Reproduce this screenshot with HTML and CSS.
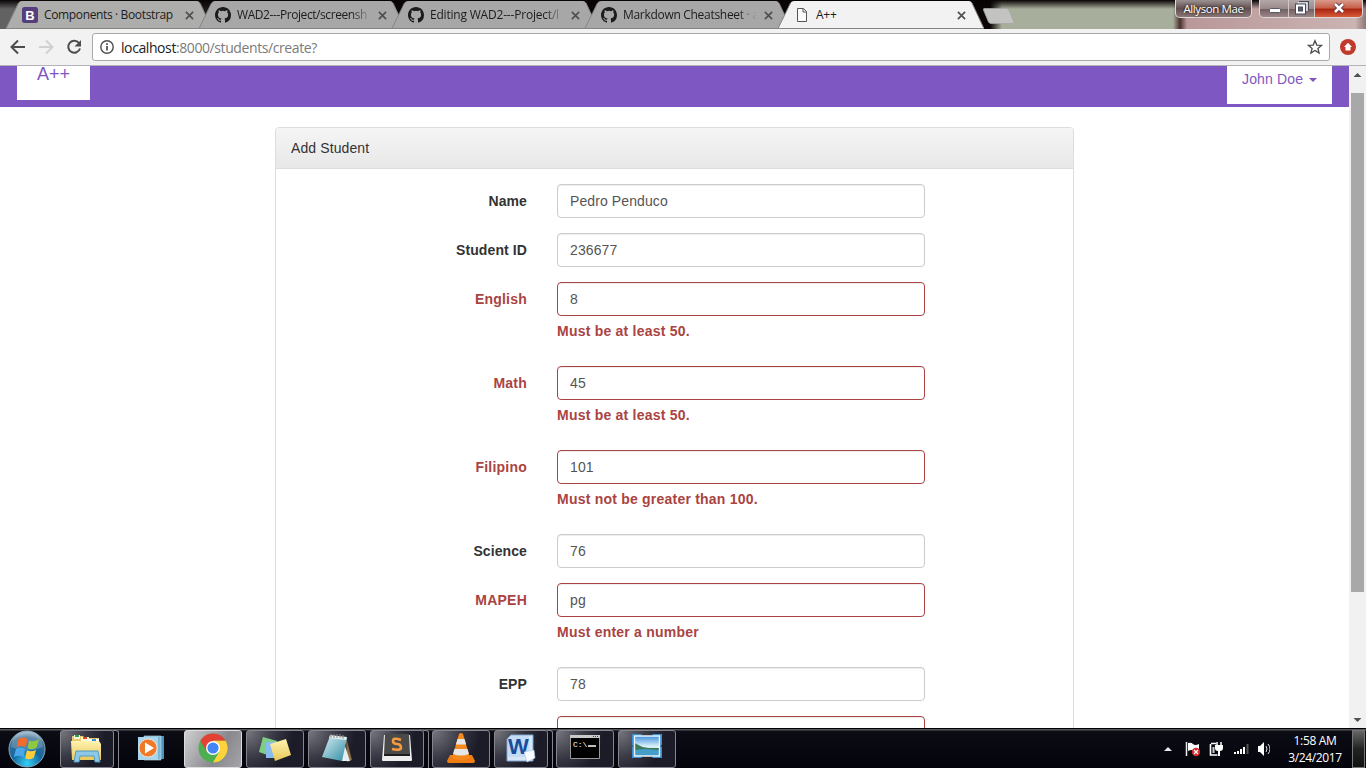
FILE: index.html
```html
<!DOCTYPE html>
<html lang="en">
<head>
<meta charset="utf-8">
<title>A++</title>
<link rel="stylesheet" href="styles.css">
</head>
<body>
<svg width="0" height="0" class="defs">
  <defs>
    <symbol id="x" viewBox="0 0 10 10"><path d="M1 1l8 8M9 1L1 9" stroke="#4f4f4f" stroke-width="1.8" fill="none"/></symbol>
    <symbol id="github" viewBox="0 0 16 16"><path fill="#1b1b1b" d="M8 0C3.58 0 0 3.58 0 8c0 3.54 2.29 6.53 5.47 7.59.4.07.55-.17.55-.38 0-.19-.01-.82-.01-1.49-2.01.37-2.53-.49-2.69-.94-.09-.23-.48-.94-.82-1.13-.28-.15-.68-.52-.01-.53.63-.01 1.08.58 1.23.82.72 1.21 1.87.87 2.33.66.07-.52.28-.87.51-1.07-1.78-.2-3.64-.89-3.64-3.95 0-.87.31-1.59.82-2.15-.08-.2-.36-1.02.08-2.12 0 0 .67-.21 2.2.82a7.6 7.6 0 0 1 4 0c1.53-1.04 2.2-.82 2.2-.82.44 1.1.16 1.92.08 2.12.51.56.82 1.27.82 2.15 0 3.07-1.87 3.75-3.65 3.95.29.25.54.73.54 1.48 0 1.07-.01 1.93-.01 2.2 0 .21.15.46.55.38A8 8 0 0 0 16 8c0-4.42-3.58-8-8-8z"/></symbol>
    <symbol id="tabshape" viewBox="0 0 206 29"><path class="fill" d="M0 29L12.500 3Q13.500 1 16 1H191Q193 1 194 3L206 29Z"/><path class="edge" d="M0 28.500L12.500 3M194 3L206 28.500H0" fill="none"/></symbol>
    <linearGradient id="sky" x2="0" y2="1"><stop stop-color="#3d8fdc"/><stop offset=".5" stop-color="#d8eef8"/></linearGradient>
    <linearGradient id="pad" x2="1" y2="1"><stop stop-color="#d9f0f4"/><stop offset="1" stop-color="#2f8ba3"/></linearGradient>
    <linearGradient id="yel" x2="0" y2="1"><stop stop-color="#fff3b0"/><stop offset="1" stop-color="#e9c85a"/></linearGradient>
    <radialGradient id="orb" cx=".5" cy=".9" r=".9"><stop stop-color="#35d0f5"/><stop offset=".45" stop-color="#14679f"/><stop offset=".8" stop-color="#3d6f94"/><stop offset="1" stop-color="#a9c3d3"/></radialGradient>
  </defs>
</svg>

<header class="tabstrip">
  <div class="tab blurry-a">
    <svg class="shape"><use href="#tabshape"/></svg>
    <svg class="favicon" viewBox="0 0 16 16"><rect width="16" height="16" rx="2.500" fill="#563d7c"/><text x="8" y="12.800" text-anchor="middle" class="b-letter">B</text></svg>
    <span class="title t1">Components · Bootstrap</span><svg class="close"><use href="#x"/></svg>
  </div>
  <div class="tab">
    <svg class="shape"><use href="#tabshape"/></svg>
    <svg class="favicon"><use href="#github"/></svg>
    <span class="title t2 fade">WAD2---Project/screensh</span><svg class="close"><use href="#x"/></svg>
  </div>
  <div class="tab">
    <svg class="shape"><use href="#tabshape"/></svg>
    <svg class="favicon"><use href="#github"/></svg>
    <span class="title t3 fade">Editing WAD2---Project/l</span><svg class="close"><use href="#x"/></svg>
  </div>
  <div class="tab">
    <svg class="shape"><use href="#tabshape"/></svg>
    <svg class="favicon"><use href="#github"/></svg>
    <span class="title t4 fade">Markdown Cheatsheet · a</span><svg class="close"><use href="#x"/></svg>
  </div>
  <div class="tab active">
    <svg class="shape"><use href="#tabshape"/></svg>
    <svg class="favicon" viewBox="0 0 16 16"><path d="M3.500 1.500H9.500L12.500 4.500V14.500H3.500ZM9 1.500V5H12.500" fill="#fafafa" stroke="#555"/></svg>
    <span class="title t5">A++</span><svg class="close"><use href="#x"/></svg>
  </div>
  <svg class="newtab" viewBox="0 0 34 16"><path d="M2 .5H24Q26 .5 27 2L32 14.500Q32 15.500 31 15.500H9Q7.500 15.500 6.500 14L1.500 2Q1 .5 2 .5Z" fill="#c3c4c1" stroke="#a3a59f" stroke-width=".8"/></svg>
  <div class="caption">
    <div class="user">Allyson Mae</div>
    <div class="winbtns">
      <div class="wb"><svg width="28" height="18"><rect x="9.500" y="8.500" width="11" height="4" rx="1" fill="#fff" stroke="#555a66"/></svg></div>
      <div class="wb"><svg width="25" height="18"><path d="M10 3h8v8" fill="none" stroke="#444b5c" stroke-width="4"/><path d="M9 3h9v8" fill="none" stroke="#fff" stroke-width="1.500"/><path d="M8 5.500h7v7h-7z" fill="#555c6a" stroke="#444b5c" stroke-width="4"/><path d="M8 5.500h7v7h-7z" fill="none" stroke="#fff" stroke-width="2"/></svg></div>
      <div class="wb red"><svg width="47" height="18"><path d="M20 4l8 8M28 4l-8 8" stroke="#563038" stroke-width="4.500"/><path d="M20 4l8 8M28 4l-8 8" stroke="#fff" stroke-width="2.600"/></svg></div>
    </div>
  </div>
</header>

<div class="toolbar">
  <svg class="nav" viewBox="0 0 92 36"><g fill="none" stroke-width="2"><path d="M25 18H12.500M18 11.500L11.500 18L18 24.500" stroke="#4d4d4d"/><path d="M39 18H51.500M46 11.500L52.500 18L46 24.500" stroke="#d0d0d0"/><path d="M79 14A6 6 0 1 0 80 19.500" stroke="#4d4d4d"/></g><path d="M81 11v6.500h-6.500z" fill="#4d4d4d"/></svg>
  <div class="omnibox">
    <svg width="14" height="14" viewBox="0 0 14 14"><circle cx="7" cy="7" r="6.200" fill="none" stroke="#4d4d4d" stroke-width="1.400"/><path d="M7 6v4.500M7 3.300v1.600" stroke="#4d4d4d" stroke-width="1.700"/></svg>
    <span class="url"><b>localhost</b>:8000/students/create?</span>
    <svg class="star" width="16" height="16" viewBox="0 0 16 16"><path d="M8 1.700L9.800 6.100L14.500 6.400L10.900 9.400L12.100 14L8 11.500L3.900 14L5.100 9.400L1.500 6.400L6.200 6.100Z" fill="none" stroke="#4b4b4b" stroke-width="1.300"/></svg>
  </div>
  <svg class="ext" width="16" height="16" viewBox="0 0 16 16"><circle cx="8" cy="8" r="8" fill="#c0392b"/><path d="M8 3.700L12 8H10.500V11.500H5.500V8H4Z" fill="#fff"/></svg>
</div>

<div class="viewport">
  <main class="page">
    <nav class="navbar"><a class="brand">A++</a><a class="account">John Doe <i class="caret"></i></a></nav>
    <section class="panel">
      <h1 class="panel-heading">Add Student</h1>
      <form class="panel-body">
        <div class="group"><label>Name</label><div class="control">Pedro Penduco</div></div>
        <div class="group"><label>Student ID</label><div class="control">236677</div></div>
        <div class="group error"><label>English</label><div class="control">8</div><strong class="help">Must be at least 50.</strong></div>
        <div class="group error"><label>Math</label><div class="control">45</div><strong class="help">Must be at least 50.</strong></div>
        <div class="group error"><label>Filipino</label><div class="control">101</div><strong class="help">Must not be greater than 100.</strong></div>
        <div class="group"><label>Science</label><div class="control">76</div></div>
        <div class="group error"><label>MAPEH</label><div class="control">pg</div><strong class="help">Must enter a number</strong></div>
        <div class="group"><label>EPP</label><div class="control">78</div></div>
        <div class="group error"><label></label><div class="control"></div></div>
      </form>
    </section>
  </main>
  <aside class="scrollbar">
    <svg width="17" height="17"><path d="M8.500 7L12.500 11H4.500Z" fill="#505050"/></svg>
    <div class="thumb"></div>
    <svg class="down" width="17" height="17"><path d="M8.500 11L12.500 7H4.500Z" fill="#505050"/></svg>
  </aside>
</div>

<footer class="taskbar">
  <svg class="start" width="40" height="40" viewBox="0 0 40 40"><circle cx="20" cy="20" r="18" fill="url(#orb)" stroke="#89a9bd"/><path d="M4 18Q5 3 20 3T36 18Q20 25 4 18Z" fill="#fff" opacity=".2"/><g transform="translate(-2.500 -3.500) scale(1.150)"><path d="M12 12Q16 9 20 12L18.500 19Q14.500 16.500 10.500 19Z" fill="#f26a2c"/><path d="M21.500 13Q25 15 30 12L28 19Q24 22 20 19.500Z" fill="#8fc93f"/><path d="M10 20.500Q14 18 18 20.500L16.500 27.500Q12.500 25 8 27.500Z" fill="#4aa8ea"/><path d="M19.500 21.500Q23.500 23.500 27.500 21L25.500 28Q21.500 30.500 18 28.500Z" fill="#ffcd3a"/></g></svg>
  <div class="task stacked"><svg viewBox="0 0 36 32"><path d="M3 4h11l2 2h14v22H3z" fill="#e9ca6d"/><path d="M5 3h6v4H5z" fill="#f7f7e0"/><path d="M6 3h4v2H6z" fill="#31a049"/><path d="M12 5h8v5h-8z" fill="#fff7d0"/><path d="M14 5h4v2h-4z" fill="#d64b2a"/><path d="M20 7h10v5H20z" fill="#fff"/><path d="M23 7h4v2h-4z" fill="#3c90d8"/><path d="M2 9h28l2 3v16H3z" fill="url(#yel)"/><path d="M7 19h22l2 11h-5l-1-6H11l-1 6H5z" fill="#8cc9e8" stroke="#5598c0"/></svg></div>
  <div class="task plain"><svg viewBox="0 0 36 32"><path d="M14 4h17v23H14z" fill="#4a92bb"/><path d="M11 4h17v24H11z" fill="#7db7d6" stroke="#cae5f1" stroke-width=".6"/><path d="M5 5h20v23H5z" fill="#a9d4e9"/><circle cx="15" cy="16" r="9" fill="#ef7927" stroke="#fff" stroke-opacity=".6"/><path d="M12 10.500v11l9-5.500z" fill="#fff"/></svg></div>
  <div class="task lit"><svg viewBox="0 0 36 32"><circle cx="18" cy="16" r="14.500" fill="#4caf50"/><path d="M18 16L5.400 8.750A14.500 14.500 0 0 1 30.600 8.750H18Z" fill="#e34133"/><path d="M18 8.750H30.600A14.500 14.500 0 0 1 18 30.500L24.300 19.600Z" fill="#fdd23c"/><path d="M5.400 8.750L11.700 19.600L18 16V8.750Z" fill="#e34133"/><circle cx="18" cy="16" r="7" fill="#fff"/><circle cx="18" cy="16" r="5.600" fill="#4285f4"/></svg></div>
  <div class="task"><svg viewBox="0 0 36 32"><path d="M6 5l14 4-4 16-14-5z" fill="#7fce86"/><path d="M9 10h15v16H9z" fill="#88bcf0"/><path d="M13 12l16-5 5 16-16 6z" fill="url(#yel)"/></svg></div>
  <div class="task"><svg viewBox="0 0 36 32"><path d="M27 5l6 23-5 2z" fill="#8a6b48"/><path d="M23 5l8 24h-8z" fill="#e8eef0"/><path d="M11 4l17 2-5 23-20-4z" fill="url(#pad)"/><path d="M11 3l17 2-1 3-17-2z" fill="#e6eeee"/><path d="M12 2v4m3-4v4m3-4v4m3-4v4m3-3v4" stroke="#888"/></svg></div>
  <div class="task stacked"><svg viewBox="0 0 36 32"><path d="M5 3h26l2 25q0 1-1 1H4q-1 0-1-1z" fill="#eee"/><path d="M6 2h24l1 20H5z" fill="#4a4a4a"/><path d="M5 22h26v2H5z" fill="#1d1d1d"/><path d="M22 8Q14 5 14 9Q14 12 18 12T22 16Q21 19 13 17" fill="none" stroke="#f59a3d" stroke-width="2.600"/></svg></div>
  <div class="task"><svg viewBox="0 0 36 32"><path d="M7 23h22l3 6q0 2-2 2H6q-2 0-2-2z" fill="#f07c12"/><path d="M16 2q2-2 4 0l7 24q-9 4-18 0z" fill="#f58a1c"/><path d="M14.500 7h7l1.600 5.500h-10.200z" fill="#e6e6e6"/><path d="M11.500 17h13l1.500 5q-8 3-16 0z" fill="#e6e6e6"/></svg></div>
  <div class="task stacked"><svg viewBox="0 0 36 32"><path d="M8 3h22v26H4V7z" fill="#d7e6f7" stroke="#7aa5d2"/><path d="M5 7l3-3h18v21H5z" fill="#c3dbf5"/><text x="15.500" y="22" text-anchor="middle" class="w-letter">W</text><path d="M21 20l10-2 1 8-8 4z" fill="#f8fbff" stroke="#a9c4e4" stroke-width=".6"/></svg></div>
  <div class="task"><svg viewBox="0 0 36 32"><path d="M3.500 3.500h29v23h-29z" fill="#000" stroke="#999"/><path d="M3 3h30v3H3z" fill="#c9c9c9"/><path d="M26 4.500h6" stroke="#444" stroke-dasharray="1 1"/><text x="6" y="15" class="cmd">C:\</text><path d="M21 14h8" stroke="#fff" stroke-width="1.500"/></svg></div>
  <div class="task"><svg viewBox="0 0 36 32"><path d="M3 2h10l-3 4H7v6l-4 3zM33 2H23l3 4h3v6l4 3zM3 26h10l-3-4H7v-6l-4-3zM33 26H23l3-4h3v-6l4-3z" fill="#3b8fd0"/><path d="M5.500 4h25v20h-25z" fill="url(#sky)"/><path d="M5.500 11l8 4 6 1h11v4h-25z" fill="#3c7a5a"/><path d="M5.500 18l10-1 15 1v6h-25z" fill="#459dca"/><path d="M5.500 4h25v20h-25z" fill="none" stroke="#e9f5fb" stroke-width="1.400"/></svg></div>
  <div class="tray">
    <svg width="110" height="40" viewBox="0 0 110 40"><path d="M4 23L8 19L12 23Z" fill="#e8e8f0"/>
      <path d="M26.500 14v14" stroke="#eee" stroke-width="1.500"/><path d="M28 15q3-1 5 1t6 0v8q-3 1-5-1t-6 0z" fill="#fff"/><circle cx="36" cy="24" r="4.200" fill="#d9292b"/><path d="M34 22l4 4m0-4l-4 4" stroke="#fff" stroke-width="1.300"/>
      <path d="M51 15.500h5M50.500 16v11h7" fill="none" stroke="#fff" stroke-width="1.600"/><path d="M53.500 19v6" stroke="#ccc" stroke-width="2"/><path d="M57 14v4m4-4v4" stroke="#fff" stroke-width="1.500"/><path d="M55 17h8v3q0 3-3 3v5h-2v-5q-3 0-3-3z" fill="#fff"/>
      <path d="M75 26v-2m3 2v-3m3 3v-5m3 5v-7" stroke="#fff" stroke-width="2"/><path d="M87.500 26V16" stroke="#555" stroke-width="2"/>
      <path d="M98 18h2l4-4v14l-4-4h-2z" fill="#fff"/><path d="M106 18q2 3 0 6m2-8q4 5 0 10" fill="none" stroke="#ddd"/></svg>
    <div class="clock"><span>1:58 AM</span><span>3/24/2017</span></div>
    <div class="show-desktop"></div>
  </div>
</footer>
</body>
</html>
```
FILE: styles.css
```css
* { box-sizing: border-box; }
body { margin: 0; width: 1366px; height: 768px; overflow: hidden; display: flex; flex-direction: column; font: 14px/22px "Liberation Sans", Arial, sans-serif; background: #fff; }
.defs { position: absolute; }

/* Tab strip */
.tabstrip { height: 29px; flex: none; display: flex; padding-left: 6px; background: linear-gradient(#080404, rgba(8,4,4,0) 9px), linear-gradient(90deg, #626262 0 12px, #1b1a15 210px, #0b0505 240px 990px, #a8ae9c 1002px 1173px, #4b302d 1180px, #b99798 1187px, #cbb4b4 1355px, #8d7777); }
.tab { position: relative; width: 206px; margin-right: -13px; padding-left: 16px; display: flex; align-items: center; flex: none; font: 12px "Open Sans", sans-serif; color: #1c1c1c; }
.shape { position: absolute; inset: 0; width: 206px; height: 29px; fill: #a7a7a7; stroke: none; }
.edge { stroke: #858585; stroke-width: 1; }
.blurry-a .shape { fill: #adadab; }
.active { z-index: 1; }
.active .shape { fill: #f2f2f2; }
.favicon { position: relative; width: 16px; height: 16px; flex: none; }
.b-letter { font: bold 13px "Liberation Sans", sans-serif; fill: #fff; }
.title { position: relative; margin-left: 6px; width: 134px; white-space: nowrap; flex: none; letter-spacing: -.25px; }
.t1 { letter-spacing: -.36px; }
.t2 { letter-spacing: -.42px; }
.t3 { letter-spacing: -.2px; }
.t4 { letter-spacing: -.3px; }
.fade { -webkit-mask-image: linear-gradient(90deg, #000 115px, transparent 134px); mask-image: linear-gradient(90deg, #000 115px, transparent 134px); }
.close { position: relative; width: 9px; height: 9px; margin-left: 7px; margin-top: 1px; flex: none; }
.newtab { width: 34px; height: 16px; margin: 8px 0 0 11px; align-self: flex-start; z-index: 2; }
.caption { margin-left: auto; display: flex; align-items: flex-start; gap: 7px; padding-right: 3px; }
.user { width: 77px; height: 18px; border: 1px solid #dedada; border-top: 0; border-radius: 0 0 5px 5px; background: linear-gradient(#9c9292, #625050 50%, #8b7777); color: #fff; font: 11.500px/17px "Open Sans", sans-serif; letter-spacing: -.4px; text-align: center; text-shadow: 0 0 3px #000; white-space: nowrap; }
.winbtns { display: flex; border: 1px solid #e0d8d8; border-top: 0; border-radius: 0 0 5px 5px; overflow: hidden; height: 18px; }
.wb { height: 18px; background: linear-gradient(#b5a8a8, #99898a 48%, #725e60 50%, #a08b8d); border-right: 1px solid #d2c7c7; }
.wb svg { display: block; }
.red { border: 0; background: linear-gradient(#d99a8b, #c55e49 45%, #a92410 50%, #dc6140); }

/* Address bar */
.toolbar { height: 37px; flex: none; background: #f2f2f2; border-bottom: 1px solid #b5b2b9; display: flex; align-items: center; }
.nav { width: 92px; height: 36px; }
.omnibox { width: 1238px; height: 28px; border: 1px solid #a9a9a9; border-radius: 3px; background: #fff; display: flex; align-items: center; padding: 0 6px 0 7px; }
.url { margin-left: 7px; font: 14px "Open Sans", sans-serif; color: #7b7b7b; letter-spacing: -.41px; }
.url b { font-weight: 400; color: #222; }
.star { margin-left: auto; }
.ext { margin-left: 10px; }

/* Document */
.viewport { height: 662px; flex: none; display: flex; overflow: hidden; }
.page { width: 1349px; height: 662px; overflow: hidden; }
.navbar { height: 41px; background: #7e57c2; display: flex; justify-content: space-between; align-items: flex-start; padding: 0 17px; color: #7e57c2; }
.brand { width: 73px; height: 34px; background: #fff; text-align: center; font-size: 18px; line-height: 16px; }
.account { width: 105px; height: 38px; background: #fff; padding: 2px 0 0 15px; display: flex; align-items: flex-start; letter-spacing: .15px; }
.caret { margin: 10px 0 0 6px; border: 4px solid transparent; border-top-color: #7e57c2; border-bottom: 0; }
.panel { width: 799px; height: 700px; margin: 20px 0 0 275px; border: 1px solid #ddd; border-radius: 4px; }
.panel-heading { margin: 0; height: 41px; padding: 9px 15px; font-weight: 400; font-size: 14px; color: #333; background: linear-gradient(#f5f5f5, #e8e8e8); border-bottom: 1px solid #ddd; border-radius: 3px 3px 0 0; letter-spacing: .1px; }
.panel-body { padding-top: 15px; display: flex; flex-direction: column; gap: 15px; }
.group { display: grid; grid-template-columns: 251px 368px; column-gap: 30px; color: #333; }
.group label { text-align: right; font-weight: 700; padding-top: 6px; letter-spacing: .1px; }
.group.error label { letter-spacing: .22px; }
.control { height: 34px; border: 1px solid #ccc; border-radius: 4px; padding: 5px 12px; color: #555; box-shadow: inset 0 1px 1px rgba(0,0,0,.075); letter-spacing: .1px; }
.error, .help { color: #a94442; }
.error .control { border-color: #a94442; }
.help { grid-column: 2; height: 35px; padding-top: 4px; letter-spacing: .22px; }
.scrollbar { width: 17px; background: #f1f1f1; display: flex; flex-direction: column; align-items: center; }
.scrollbar svg { flex: none; }
.thumb { width: 13px; height: 499px; margin-top: 10px; background: #a8a8a8; }
.down { margin-top: auto; }

/* Taskbar */
.taskbar { height: 40px; flex: none; display: flex; align-items: center; padding-left: 7px; border-top: 1px solid #000; background: linear-gradient(#55555b 0 1px, #0c0c14 2px, #04040c); }
.start { margin-right: 13px; }
.task { position: relative; width: 58px; height: 38px; margin-right: 4px; flex: none; border: 1px solid #85858f; border-radius: 3px; background: radial-gradient(circle at 0 0, #77777f, #3a3a46 40%, #1c1c28 70%); display: flex; align-items: center; justify-content: center; }
.task svg { width: 36px; height: 32px; margin-top: -2px; }
.stacked { width: 54px; margin-right: 8px; }
.stacked::after { content: ""; position: absolute; left: 52px; top: -1px; width: 5px; height: 38px; border: 1px solid #85858f; border-left: 0; border-radius: 0 3px 3px 0; }
.plain { border-color: transparent; background: none; }
.lit { background: linear-gradient(120deg, #d0d0d2, #88888d 60%, #a5a5a9); border-color: #ddd; }
.w-letter { font: bold 22px "Liberation Sans", sans-serif; fill: #174d9b; }
.cmd { font: 8px "Liberation Mono", monospace; fill: #fff; }
.tray { margin-left: auto; display: flex; align-items: center; height: 40px; }
.tray > svg { margin-top: -2px; }
.clock { width: 70px; margin-left: 10px; margin-right: 2px; display: flex; flex-direction: column; color: #fff; text-align: center; font: 12px/17px "Open Sans", sans-serif; letter-spacing: -.35px; white-space: nowrap; padding-top: 1px; }
.show-desktop { width: 13px; height: 38px; margin-right: 1px; border: 1px solid #77777a; background: linear-gradient(#666, #222 50%, #111); }
```
